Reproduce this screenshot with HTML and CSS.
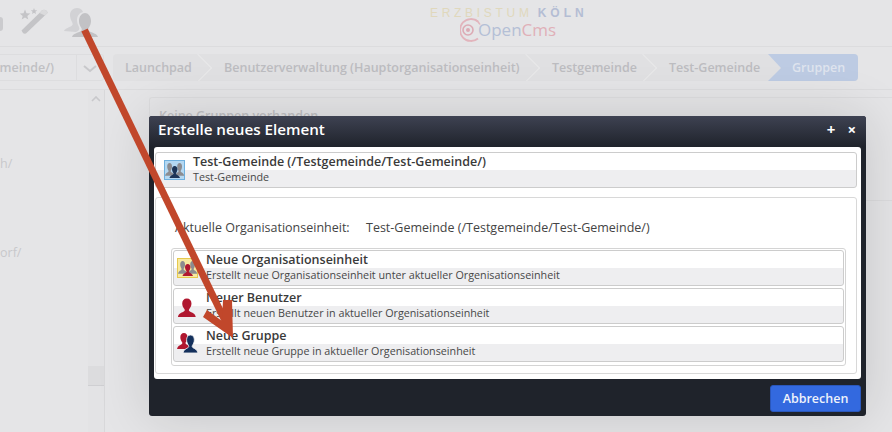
FILE: index.html
```html
<!DOCTYPE html>
<html lang="de">
<head>
<meta charset="utf-8">
<title>OpenCms</title>
<link rel="stylesheet" href="styles.css">
</head>
<body>
<div class="app">
  <header class="top">
    <span class="cut-icon"></span>
    <svg class="tool wand" width="30" height="28" viewBox="0 0 30 28"><path d="M1.500 22.500 L22 2.500 Q24 1 26 2.500 L28 4.500 L6 25.500 Q4 26 3 25 Z" fill="#c4c4c7"/><path d="M22 2.500 Q24 1 26 2.500 L28 4.500 L25 7.500 L19.500 5Z" fill="#dadadc"/><path d="M5 1.500l1.500 3.800 3.800.2-3 2.400 1 3.700L5 9.500l-3.300 2.100 1-3.700-3-2.400 3.800-.2z" fill="#c4c4c7"/><path d="M14 0l.9 2.200 2.300.1-1.800 1.500.6 2.300-2-1.300-2 1.300.6-2.300-1.800-1.500 2.300-.1z" fill="#c4c4c7"/></svg>
    <svg class="tool people" width="34" height="30" viewBox="0 0 34 30"><path d="M0 23c1-3 6-3.500 8-5.500 1-1 .8-2 0-3.500-1-2-2-4-2-7 0-4 3-7 7-7 3 0 5 1.500 6 4-4 1-6 4-6 8 0 3 1 5 2 7 .5 1 .5 2 0 3-1 1-2 1.500-3 2z" fill="#d2d2d5"/><path d="M8 29c1-3.500 6-4 9-6 1-1 1-2 .2-3.200-1.200-2-2.200-4-2.200-6.800 0-5 3-8 6-8s6 3 6 8c0 2.800-1 4.800-2.200 6.800-.8 1.200-.8 2.200.2 3.200 3 2 8 2.500 9 6z" fill="#c2c2c5"/></svg>
    <div class="logo">
      <div class="logo-line"><span class="gold">ERZBISTUM</span><span class="blue">KÖLN</span></div>
      <div class="cms">
        <svg class="cms-mark" width="24" height="24" viewBox="0 0 24 24"><path d="M18 3.500A11 11 0 1 0 18 20.500" fill="none" stroke="#e2b4bc" stroke-width="1.800"/><path d="M15 1.500a11 11 0 0 1 5 5" fill="none" stroke="#e2b4bc" stroke-width="1.500"/><circle cx="8" cy="12" r="5" fill="none" stroke="#dcaab4" stroke-width="1.600"/><circle cx="8" cy="12" r="2" fill="#dcaab4"/></svg>
        <span class="open">Open</span><span class="c">Cms</span>
      </div>
    </div>
  </header>
  <nav class="crumbbar">
    <div class="ou-select"><span class="ou-text">(/Testgemeinde/Test-Gemeinde/)</span><span class="ou-arrow"><svg width="14" height="8" viewBox="0 0 14 8"><path d="M1 1l6 5 6-5" fill="none" stroke="#c8c8cb" stroke-width="2"/></svg></span></div>
    <div class="crumbs">
      <span class="crumb c1">Launchpad</span>
      <span class="crumb c2">Benutzerverwaltung (Hauptorganisationseinheit)</span>
      <span class="crumb c3">Testgemeinde</span>
      <span class="crumb c4">Test-Gemeinde</span>
      <span class="crumb active">Gruppen</span>
    </div>
  </nav>
  <main class="main">
    <aside class="side">
      <div class="tree">
        <p class="t1">h/</p>
        <p class="t2">orf/</p>
      </div>
      <div class="sb">
        <svg class="sb-up" width="10" height="6" viewBox="0 0 10 6"><path d="M1 5l4-4 4 4" fill="none" stroke="#c8c8cb" stroke-width="1.600"/></svg>
        <div class="sb-thumb"></div>
      </div>
    </aside>
    <section class="content">
      <div class="panel">Keine Gruppen vorhanden</div>
    </section>
  </main>
</div>

<div class="shade"></div>

<svg class="defs" width="0" height="0"><defs><path id="person" d="M10.500 2c2.500 0 4 1.800 4 4.300 0 2-1 3.700-2 5-.6 1 0 1.700 1 2.200 2 1 4 1.500 4.700 4.500H2.800c.7-3 2.700-3.500 4.700-4.500 1-.5 1.600-1.200 1-2.200-1-1.300-2-3-2-5C6.500 3.800 8 2 10.500 2z"/></defs></svg>

<div class="dialog">
  <div class="dlg-head">
    <span class="dlg-title">Erstelle neues Element</span>
    <span class="dlg-btns"><span>+</span><span>×</span></span>
  </div>
  <div class="dlg-body">
    <div class="item top-item">
      <svg class="ico" width="22" height="22" viewBox="0 0 22 22"><rect x=".5" y="1.500" width="20" height="19" fill="#b4d8f2" stroke="#6fb0de"/><g fill="#8c8c90"><use href="#person" transform="translate(1 4) scale(.6 .8) translate(-2.800 -2)"/><use href="#person" transform="translate(11 4) scale(.6 .8) translate(-2.800 -2)"/></g><use href="#person" fill="#1d3557" transform="translate(5.500 7) scale(.68 .75) translate(-2.800 -2)"/></svg>
      <div class="bands">
        <div class="b-title">Test-Gemeinde (/Testgemeinde/Test-Gemeinde/)</div>
        <div class="b-sub">Test-Gemeinde</div>
      </div>
    </div>
    <div class="group">
      <div class="ou-line"><span class="ou-label">Aktuelle Organisationseinheit:</span><span>Test-Gemeinde (/Testgemeinde/Test-Gemeinde/)</span></div>
      <div class="list">
        <div class="item row">
          <svg class="ico" width="22" height="22" viewBox="0 0 22 22"><rect x=".5" y="1.500" width="20" height="19" fill="#f7e9a0" stroke="#e6c94f"/><g fill="#8c8c90"><use href="#person" transform="translate(1 4) scale(.6 .8) translate(-2.800 -2)"/><use href="#person" transform="translate(11 4) scale(.6 .8) translate(-2.800 -2)"/></g><use href="#person" fill="#b01830" transform="translate(5.500 7) scale(.68 .75) translate(-2.800 -2)"/></svg>
          <div class="bands"><div class="b-title">Neue Organisationseinheit</div><div class="b-sub">Erstellt neue Organisationseinheit unter aktueller Orgenisationseinheit</div></div>
        </div>
        <div class="item row">
          <svg class="ico" width="22" height="22" viewBox="2 -1 19 19"><use href="#person" fill="#b01830"/></svg>
          <div class="bands"><div class="b-title">Neuer Benutzer</div><div class="b-sub">Erstellt neuen Benutzer in aktueller Orgenisationseinheit</div></div>
        </div>
        <div class="item row">
          <svg class="ico" width="22" height="22" viewBox="0 0 22 22"><use href="#person" fill="#b01830" transform="scale(.9 1) translate(-2.800 -2)"/><use href="#person" fill="#14305c" stroke="#f0f0f2" stroke-width=".8" transform="translate(6 2) scale(.97 1.125) translate(-2.800 -2)"/></svg>
          <div class="bands"><div class="b-title">Neue Gruppe</div><div class="b-sub">Erstellt neue Gruppe in aktueller Orgenisationseinheit</div></div>
        </div>
      </div>
    </div>
  </div>
  <div class="dlg-foot"><button class="cancel" type="button">Abbrechen</button></div>
</div>

<svg class="arrow" width="892" height="432" viewBox="0 0 892 432">
  <path d="M84.500 30 L229 329" stroke="#c1472b" stroke-width="7" fill="none"/>
  <path d="M233 338 L203 317 L207 310 L222 321 L223 300 L232 300Z" fill="#c1472b"/>
</svg>
</body>
</html>
```
FILE: styles.css
```css
* { box-sizing: border-box; }
html, body { margin: 0; padding: 0; height: 100%; overflow: hidden; }
body { font-family: "Open Sans", "Liberation Sans", sans-serif; background: #e5e5e7; color: #333; }
.app { width: 892px; height: 432px; display: flex; flex-direction: column; overflow: hidden; }
.defs { position: absolute; }

.top { height: 47px; flex: none; border-bottom: 1px solid #dcdcde; position: relative; display: flex; padding-top: 8px; }
.cut-icon { width: 3px; height: 14px; margin-top: 9px; margin-right: 17px; background: #cbcbce; border-radius: 0 7px 7px 0; flex: none; }
.tool { display: block; flex: none; }
.people { margin-left: 14px; }
.logo { position: absolute; left: 430px; top: 6px; width: 160px; }
.logo-line { font-family: "Liberation Sans", sans-serif; font-size: 12px; line-height: 15px; white-space: nowrap; display: flex; }
.gold { color: #e0d8bc; letter-spacing: 3.700px; }
.blue { color: #b4bdd4; font-weight: 700; letter-spacing: 4px; margin-left: 5px; }
.cms { display: flex; align-items: center; margin-left: 30px; height: 24px; margin-top: -3px; font-size: 17px; line-height: 24px; }
.cms-mark { flex: none; margin-right: -6px; }
.open { color: #b4bfd6; }
.c { color: #e0b0b8; }

.crumbbar { flex: none; height: 43px; padding-top: 7px; display: flex; border-bottom: 1px solid #dcdcde; }
.ou-select { width: 104px; height: 27px; flex: none; border: 1px solid #dddddf; border-left: 0; display: flex; justify-content: flex-end; overflow: hidden; color: #c0c0c3; font-size: 12.500px; line-height: 25px; font-weight: 600; border-radius: 0 3px 3px 0; }
.ou-text { white-space: nowrap; flex: none; padding-right: 22px; }
.ou-arrow { width: 27px; flex: none; border-left: 1px solid #dddddf; display: flex; align-items: center; justify-content: center; padding-top: 2px; }
.crumbs { margin-left: 9px; width: 745px; height: 27px; background: #e0e0e2; border-radius: 4px; display: flex; font-size: 12.500px; line-height: 27px; font-weight: 600; color: #bcbcc0; overflow: hidden; }
.crumb { white-space: nowrap; position: relative; flex: none; }
.crumb::after { content: ""; position: absolute; right: -5px; top: 4px; width: 19px; height: 19px; transform: rotate(45deg); border-top: 1px solid #e9e9eb; border-right: 1px solid #e9e9eb; }
.c1 { padding-left: 12px; width: 90px; }
.c2 { padding-left: 21px; width: 328px; }
.c3 { padding-left: 21px; width: 117px; }
.c4 { padding-left: 21px; width: 120px; }
.c4::after { display: none; }
.crumb.active { flex: 1; background: #bdcbe3; color: #dfe4ee; padding-left: 24px; }
.crumb.active::before { content: ""; position: absolute; left: 0; top: 0; border-left: 13px solid #e0e0e2; border-top: 14px solid transparent; border-bottom: 13px solid transparent; }
.crumb.active::after { display: none; }

.main { flex: 1; display: flex; min-height: 0; }
.side { width: 105px; flex: none; display: flex; border-right: 1px solid #d8d8da; }
.tree { flex: 1; font-size: 12.500px; color: #c8c8cb; padding-top: 65px; }
.tree p { margin: 0; line-height: 18px; white-space: nowrap; }
.t2 { margin-top: 71px !important; }
.sb { width: 16px; flex: none; background: #e3e3e5; position: relative; padding-top: 6px; }
.sb-up { display: block; margin: 0 auto; }
.sb-thumb { position: absolute; left: 0; right: 0; top: 276px; height: 20px; background: #dcdcde; border-bottom: 1px solid #cfcfd2; }
.content { flex: 1; padding: 7px 0 0 44px; }
.panel { height: 104px; border: 1px solid #dcdcde; border-right: 0; border-radius: 3px 0 0 0; padding: 9px 0 0 9px; font-size: 12.500px; color: #c0c0c3; font-weight: 600; }

.shade { position: absolute; left: 149px; top: 116px; width: 717px; height: 300px; box-shadow: 0 0 50px rgba(0,0,0,.14); pointer-events: none; }

.dialog { position: absolute; left: 149px; top: 116px; width: 717px; height: 300px; background: #1f232b; border-radius: 3px; display: flex; flex-direction: column; }
.dlg-head { height: 31px; flex: none; background: linear-gradient(#3e4252, #1f232b); border-radius: 3px 3px 0 0; display: flex; justify-content: space-between; align-items: center; padding: 0 9px 5px; color: #fff; }
.dlg-title { font-size: 15.200px; font-weight: 600; }
.dlg-btns { display: flex; gap: 12px; font-size: 15px; font-weight: 700; line-height: 14px; margin-right: 1px; }
.dlg-body { margin: 0 5px; width: 707px; height: 232px; background: #fff; border-radius: 3px; padding: 5px 1px 0; display: flex; flex-direction: column; }

.item { border: 1px solid #ccc; border-radius: 3px; display: flex; position: relative; background: linear-gradient(#fff 50%, #eeeef0 50%); }
.top-item { height: 36px; width: 702px; padding-left: 8px; align-items: center; }
.ico { flex: none; display: block; }
.bands { margin-left: 7px; display: flex; flex-direction: column; min-width: 0; white-space: nowrap; align-self: flex-start; }
.b-title { font-size: 12.500px; line-height: 17px; font-weight: 600; color: #3a3a3a; }
.b-sub { font-size: 10.750px; line-height: 14px; color: #474747; }

.group { margin-top: 9px; width: 702px; height: 177px; border: 1px solid #d8d8d8; border-radius: 3px; padding: 21px 9px 0 15px; }
.ou-line { font-size: 12.500px; line-height: 18px; display: flex; color: #444; white-space: nowrap; margin-left: 4px; }
.ou-label { width: 191px; flex: none; }
.list { margin-top: 11px; width: 675px; height: 118px; border: 1px solid #d4d4d4; border-radius: 3px; padding: 1px; display: flex; flex-direction: column; gap: 2px; }
.row { height: 36px; padding-left: 3px; align-items: center; flex: none; }
.row .bands { margin-left: 7px; }

.dlg-foot { flex: 1; display: flex; justify-content: flex-end; align-items: flex-start; padding: 6px 5px 0 0; }
.cancel { width: 91px; height: 27px; background: #3369df; border: 1px solid #2a57bb; border-radius: 3px; color: #eef2fb; font-family: inherit; font-size: 12.500px; font-weight: 600; padding: 0; }

.arrow { position: absolute; left: 0; top: 0; pointer-events: none; }
```
